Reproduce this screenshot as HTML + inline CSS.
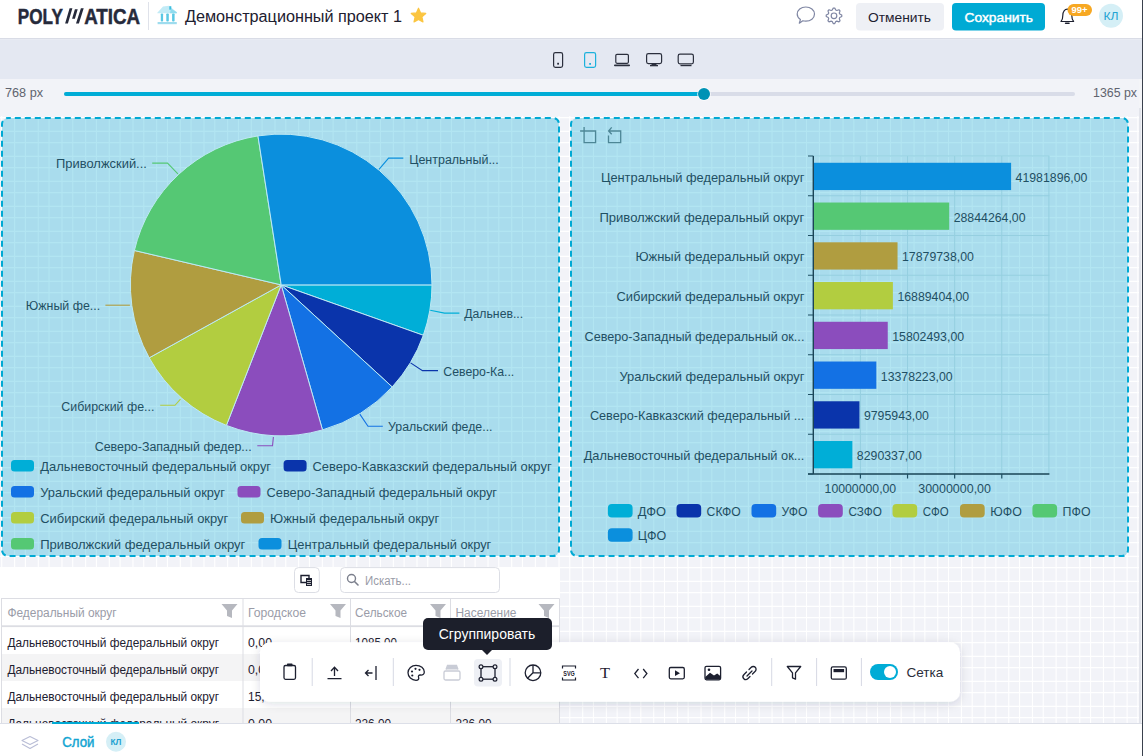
<!DOCTYPE html>
<html><head><meta charset="utf-8"><title>Polymatica</title>
<style>html,body{margin:0;padding:0;width:1143px;height:756px;overflow:hidden;background:#fff}svg{display:block;font-family:"Liberation Sans",sans-serif}</style>
</head><body><svg width="1143" height="756" viewBox="0 0 1143 756" font-family='"Liberation Sans", sans-serif'><rect x="0" y="0" width="1143" height="756" fill="#ffffff"/><rect x="0" y="38" width="1143" height="1.2" fill="#d9dce6"/><rect x="0" y="39.2" width="1143" height="39.8" fill="#e4e8f2"/><rect x="0" y="79" width="1139" height="644" fill="#f2f3f8"/><path d="M0 117.60H1139M0 131.40H1139M0 142.60H1139M0 156.40H1139M0 167.60H1139M0 181.40H1139M0 192.60H1139M0 206.40H1139M0 217.60H1139M0 231.40H1139M0 242.60H1139M0 256.40H1139M0 267.60H1139M0 281.40H1139M0 292.60H1139M0 306.40H1139M0 317.60H1139M0 331.40H1139M0 342.60H1139M0 356.40H1139M0 367.60H1139M0 381.40H1139M0 392.60H1139M0 406.40H1139M0 417.60H1139M0 431.40H1139M0 442.60H1139M0 456.40H1139M0 467.60H1139M0 481.40H1139M0 492.60H1139M0 506.40H1139M0 517.60H1139M0 531.40H1139M0 542.60H1139M0 556.40H1139M0 567.60H1139M0 581.40H1139M0 592.60H1139M0 606.40H1139M0 617.60H1139M0 631.40H1139M0 642.60H1139M0 656.40H1139M0 667.60H1139M0 681.40H1139M0 692.60H1139M0 706.40H1139M0 717.60H1139M1.72 116V723M14.62 116V723M25.39 116V723M38.29 116V723M49.06 116V723M61.96 116V723M72.73 116V723M85.63 116V723M96.40 116V723M109.30 116V723M120.07 116V723M132.97 116V723M143.74 116V723M156.64 116V723M167.41 116V723M180.31 116V723M191.08 116V723M203.98 116V723M214.75 116V723M227.65 116V723M238.42 116V723M251.32 116V723M262.09 116V723M274.99 116V723M285.76 116V723M298.66 116V723M309.43 116V723M322.33 116V723M333.10 116V723M346.00 116V723M356.77 116V723M369.67 116V723M380.44 116V723M393.34 116V723M404.11 116V723M417.01 116V723M427.78 116V723M440.68 116V723M451.45 116V723M464.35 116V723M475.12 116V723M488.02 116V723M498.79 116V723M511.69 116V723M522.46 116V723M535.36 116V723M546.13 116V723M559.03 116V723M569.80 116V723M582.70 116V723M593.47 116V723M606.37 116V723M617.14 116V723M630.04 116V723M640.81 116V723M653.71 116V723M664.48 116V723M677.38 116V723M688.15 116V723M701.05 116V723M711.82 116V723M724.72 116V723M735.49 116V723M748.39 116V723M759.16 116V723M772.06 116V723M782.83 116V723M795.73 116V723M806.50 116V723M819.40 116V723M830.17 116V723M843.07 116V723M853.84 116V723M866.74 116V723M877.51 116V723M890.41 116V723M901.18 116V723M914.08 116V723M924.85 116V723M937.75 116V723M948.52 116V723M961.42 116V723M972.19 116V723M985.09 116V723M995.86 116V723M1008.76 116V723M1019.53 116V723M1032.43 116V723M1043.20 116V723M1056.10 116V723M1066.87 116V723M1079.77 116V723M1090.54 116V723M1103.44 116V723M1114.21 116V723M1127.11 116V723M1137.88 116V723" stroke="#ffffff" stroke-width="1.1" fill="none"/><rect x="0" y="79" width="1139" height="37" fill="#f2f3f8"/><rect x="1139" y="79" width="4" height="677" fill="#f4f5f8"/><rect x="1139" y="108" width="2" height="615" fill="#e3e5ec"/><rect x="1142" y="0" width="1" height="756" fill="#3a414d"/><g fill="#262a3b"><text x="17.8" y="23.6" font-size="22.5" fill="#262a3b" font-weight="700" textLength="45" lengthAdjust="spacingAndGlyphs" stroke="#262a3b" stroke-width="0.5">POLY</text><text x="84.2" y="23.6" font-size="22.5" fill="#262a3b" font-weight="700" textLength="55.9" lengthAdjust="spacingAndGlyphs" stroke="#262a3b" stroke-width="0.5">ATICA</text></g><path d="M65.1 23.6 L67.9 23.6 L72.4 8.2 L69.6 8.2Z M72.1 18.7 L74.9 18.7 L77.7 9.2 L74.9 9.2Z M76 23.6 L78.9 23.6 L83.7 8.2 L80.9 8.2Z" fill="#262a3b"/><rect x="148" y="2" width="1" height="28" fill="#dfe2ea"/><path d="M157.3 12.8 L163 6.6 L169 5.8 L176.8 12.2 L176.8 13.2 L157.3 13.2Z" fill="#c2ebf6"/><path d="M169.3 6.2 h2 v3.5 h-2z" fill="#3cbfe0"/><path d="M171 8.5 L176.8 12.2 V13.2 H170Z" fill="#8fdbee"/><g fill="#5ac8e4"><rect x="160.8" y="13.4" width="2.3" height="8.2" rx="0.8"/><rect x="166.3" y="13.4" width="2.5" height="8.2" rx="0.8"/><rect x="172.1" y="13.4" width="2.5" height="8.2" rx="0.8"/></g><rect x="157.6" y="22" width="19.2" height="2.2" fill="#9edcee"/><text x="185" y="21.5" font-size="16" fill="#1d2030" textLength="217" lengthAdjust="spacingAndGlyphs">Демонстрационный проект 1</text><polygon points="418.50,8.20 420.62,12.89 425.73,13.45 421.92,16.91 422.97,21.95 418.50,19.40 414.03,21.95 415.08,16.91 411.27,13.45 416.38,12.89" fill="#fbc540" stroke="#fbc540" stroke-width="1.2" stroke-linejoin="round"/><path d="M800.4 19.6 C798.3 18.2 797.2 16.3 797.2 14.1 C797.2 10 801 7 805.8 7 C810.6 7 814.5 10 814.5 14.1 C814.5 18.2 810.6 21.2 805.8 21.2 C804.7 21.2 803.7 21.1 802.8 20.8 L799.3 23.2 Z" fill="none" stroke="#7f86a3" stroke-width="1.2" stroke-linejoin="round"/><polygon points="841.76,15.04 841.76,16.57 839.74,17.54 839.29,18.63 840.03,20.75 838.95,21.83 836.83,21.09 835.74,21.54 834.76,23.56 833.23,23.56 832.26,21.54 831.17,21.09 829.05,21.83 827.97,20.75 828.71,18.63 828.26,17.54 826.24,16.56 826.24,15.03 828.26,14.06 828.71,12.97 827.97,10.85 829.05,9.77 831.17,10.51 832.26,10.06 833.24,8.04 834.77,8.04 835.74,10.06 836.83,10.51 838.95,9.77 840.03,10.85 839.29,12.97 839.74,14.06" fill="none" stroke="#7f86a3" stroke-width="1.2" stroke-linejoin="round"/><circle cx="834" cy="15.8" r="2.8" fill="none" stroke="#7f86a3" stroke-width="1.2"/><rect x="856" y="3" width="88" height="27.5" rx="4" fill="#eef0f5"/><text x="868" y="21.7" font-size="13.5" fill="#1d2030" textLength="63" lengthAdjust="spacingAndGlyphs">Отменить</text><rect x="952" y="3" width="93" height="27.5" rx="4" fill="#00aad4"/><text x="964.5" y="21.7" font-size="13.5" fill="#ffffff" textLength="68.5" lengthAdjust="spacingAndGlyphs" stroke="#ffffff" stroke-width="0.45">Сохранить</text><path d="M1061 21.5 C1062.5 20 1062.8 18.5 1062.8 15.5 C1062.8 11.5 1064.8 9.2 1067.3 9.2 C1069.8 9.2 1071.8 11.5 1071.8 15.5 C1071.8 18.5 1072.1 20 1073.6 21.5 Z" fill="none" stroke="#1d2030" stroke-width="1.2" stroke-linejoin="round"/><path d="M1065.6 23.3 h3.4" stroke="#1d2030" stroke-width="1.6" stroke-linecap="round"/><rect x="1067.5" y="4" width="24.5" height="12" rx="6" fill="#f7a823"/><text x="1079.5" y="12.6" font-size="9.5" fill="#ffffff" font-weight="700" text-anchor="middle" textLength="16" lengthAdjust="spacingAndGlyphs">99+</text><circle cx="1111" cy="15.8" r="12" fill="#d5eff6"/><text x="1111" y="20" font-size="11.5" fill="#23a3d2" text-anchor="middle" textLength="15" lengthAdjust="spacingAndGlyphs">КЛ</text><rect x="553.6" y="52.6" width="9" height="14.8" rx="1.8" fill="none" stroke="#2b2f3d" stroke-width="1.2"/><rect x="557.2" y="62.8" width="1.8" height="1.8" fill="#2b2f3d"/><rect x="584.6" y="52.6" width="11" height="14.8" rx="1.8" fill="none" stroke="#1cb1dc" stroke-width="1.2"/><rect x="589.2" y="63" width="1.8" height="1.8" fill="#1cb1dc"/><rect x="615.8" y="54.3" width="12.6" height="9" rx="1.2" fill="none" stroke="#2b2f3d" stroke-width="1.2"/><rect x="614" y="64.6" width="16" height="1.6" rx="0.8" fill="#2b2f3d"/><rect x="646.6" y="53.6" width="15" height="10" rx="1.8" fill="none" stroke="#2b2f3d" stroke-width="1.2"/><rect x="651.5" y="63.8" width="5" height="1.5" fill="#2b2f3d"/><rect x="650" y="65" width="8" height="1.3" fill="#2b2f3d"/><rect x="678.2" y="54.2" width="15.2" height="9.6" rx="1.8" fill="none" stroke="#2b2f3d" stroke-width="1.2"/><rect x="680.5" y="65" width="11" height="1.2" fill="#2b2f3d"/><text x="5" y="97" font-size="12.5" fill="#60636f" textLength="38" lengthAdjust="spacingAndGlyphs">768 px</text><text x="1093" y="97" font-size="12.5" fill="#60636f" textLength="44" lengthAdjust="spacingAndGlyphs">1365 px</text><rect x="64" y="92" width="1011" height="4" rx="2" fill="#d9dce8"/><rect x="64" y="92" width="640" height="4" rx="2" fill="#00acd6"/><circle cx="704" cy="94" r="6.8" fill="#ffffff" opacity="0.9"/><circle cx="704" cy="94" r="6" fill="#0092b5"/><rect x="2" y="118" width="557" height="438" rx="6" fill="rgba(0,169,212,0.3)"/><rect x="571" y="118" width="557" height="438" rx="6" fill="rgba(0,169,212,0.3)"/><path d="M281.2 284.9 L432.00 284.90 A150.8 150.8 0 0 1 423.33 335.30Z" fill="#00aed7" stroke="#bde9f4" stroke-width="1"/><path d="M281.2 284.9 L423.33 335.30 A150.8 150.8 0 0 1 392.21 386.96Z" fill="#0a34ab" stroke="#bde9f4" stroke-width="1"/><path d="M281.2 284.9 L392.21 386.96 A150.8 150.8 0 0 1 322.51 429.93Z" fill="#1371e4" stroke="#bde9f4" stroke-width="1"/><path d="M281.2 284.9 L322.51 429.93 A150.8 150.8 0 0 1 226.38 425.38Z" fill="#8b4dbd" stroke="#bde9f4" stroke-width="1"/><path d="M281.2 284.9 L226.38 425.38 A150.8 150.8 0 0 1 149.19 357.80Z" fill="#b2cd40" stroke="#bde9f4" stroke-width="1"/><path d="M281.2 284.9 L149.19 357.80 A150.8 150.8 0 0 1 134.38 250.46Z" fill="#b09d40" stroke="#bde9f4" stroke-width="1"/><path d="M281.2 284.9 L134.38 250.46 A150.8 150.8 0 0 1 257.95 135.90Z" fill="#55c874" stroke="#bde9f4" stroke-width="1"/><path d="M281.2 284.9 L257.95 135.90 A150.8 150.8 0 0 1 432.00 284.90Z" fill="#0b8fdd" stroke="#bde9f4" stroke-width="1"/><path d="M379 169.3 L388.6 158.1 L403.3 158.1" fill="none" stroke="#0b8fdd" stroke-width="1.1"/><text x="409.2" y="164.4" font-size="12.5" fill="#1f4f63" textLength="89.6" lengthAdjust="spacingAndGlyphs">Центральный...</text><path d="M430.2 310.2 L444.5 313.1 L459.4 313.1" fill="none" stroke="#00aed7" stroke-width="1.1"/><text x="464.2" y="317.9" font-size="12.5" fill="#1f4f63" textLength="59" lengthAdjust="spacingAndGlyphs">Дальнев...</text><path d="M410.6 362.9 L422.5 370.6 L438 370.6" fill="none" stroke="#0a34ab" stroke-width="1.1"/><text x="443.3" y="376" font-size="12.5" fill="#1f4f63" textLength="71" lengthAdjust="spacingAndGlyphs">Северо-Ка...</text><path d="M359.8 414.1 L368 426.3 L382.8 426.3" fill="none" stroke="#1371e4" stroke-width="1.1"/><text x="388" y="431" font-size="12.5" fill="#1f4f63" textLength="104.5" lengthAdjust="spacingAndGlyphs">Уральский феде...</text><path d="M273.4 437 L272.5 445.7 L257.3 445.7" fill="none" stroke="#8b4dbd" stroke-width="1.1"/><text x="94.7" y="451.2" font-size="12.5" fill="#1f4f63" textLength="157" lengthAdjust="spacingAndGlyphs">Северо-Западный федер...</text><path d="M180.5 399.2 L175 405.3 L160.2 405.3" fill="none" stroke="#b2cd40" stroke-width="1.1"/><text x="61.3" y="410.6" font-size="12.5" fill="#1f4f63" textLength="93.1" lengthAdjust="spacingAndGlyphs">Сибирский фе...</text><path d="M129.9 305.2 L120.8 305.2 L105.4 305.2" fill="none" stroke="#b09d40" stroke-width="1.1"/><text x="25.8" y="309.8" font-size="12.5" fill="#1f4f63" textLength="74.3" lengthAdjust="spacingAndGlyphs">Южный фе...</text><path d="M177.9 173.8 L167.5 163.1 L152.2 163.1" fill="none" stroke="#55c874" stroke-width="1.1"/><text x="56" y="167.7" font-size="12.5" fill="#1f4f63" textLength="90.9" lengthAdjust="spacingAndGlyphs">Приволжский...</text><rect x="11" y="460.1" width="23" height="11.5" rx="3.5" fill="#00aed7"/><text x="40.2" y="471.3" font-size="13" fill="#1f4f63" textLength="230.9" lengthAdjust="spacingAndGlyphs">Дальневосточный федеральный округ</text><rect x="283.6" y="460.1" width="23" height="11.5" rx="3.5" fill="#0a34ab"/><text x="312.5" y="471.3" font-size="13" fill="#1f4f63" textLength="239.1" lengthAdjust="spacingAndGlyphs">Северо-Кавказский федеральный округ</text><rect x="11" y="486.1" width="23" height="11.5" rx="3.5" fill="#1371e4"/><text x="40.2" y="497.3" font-size="13" fill="#1f4f63" textLength="184.8" lengthAdjust="spacingAndGlyphs">Уральский федеральный округ</text><rect x="237.5" y="486.1" width="23" height="11.5" rx="3.5" fill="#8b4dbd"/><text x="266.5" y="497.3" font-size="13" fill="#1f4f63" textLength="230.5" lengthAdjust="spacingAndGlyphs">Северо-Западный федеральный округ</text><rect x="11" y="512.0999999999999" width="23" height="11.5" rx="3.5" fill="#b2cd40"/><text x="40.2" y="523.3" font-size="13" fill="#1f4f63" textLength="188.1" lengthAdjust="spacingAndGlyphs">Сибирский федеральный округ</text><rect x="241" y="512.0999999999999" width="23" height="11.5" rx="3.5" fill="#b09d40"/><text x="270" y="523.3" font-size="13" fill="#1f4f63" textLength="169.3" lengthAdjust="spacingAndGlyphs">Южный федеральный округ</text><rect x="11" y="538.0999999999999" width="23" height="11.5" rx="3.5" fill="#55c874"/><text x="40.2" y="549.3" font-size="13" fill="#1f4f63" textLength="205.2" lengthAdjust="spacingAndGlyphs">Приволжский федеральный округ</text><rect x="258.5" y="538.0999999999999" width="23" height="11.5" rx="3.5" fill="#0b8fdd"/><text x="287.8" y="549.3" font-size="13" fill="#1f4f63" textLength="203.5" lengthAdjust="spacingAndGlyphs">Центральный федеральный округ</text><path d="M860.42 156V474M907.54 156V474M954.66 156V474M1001.78 156V474M1048.90 156V474M813.3 156.00H1049.4M813.3 195.75H1049.4M813.3 235.50H1049.4M813.3 275.25H1049.4M813.3 315.00H1049.4M813.3 354.75H1049.4M813.3 394.50H1049.4M813.3 434.25H1049.4" stroke="#95cfe0" stroke-width="1" fill="none"/><rect x="813.3" y="162.78" width="197.80" height="27.3" fill="#0b8fdd"/><text x="804.4" y="181.8" font-size="12.8" fill="#1f4f63" text-anchor="end" textLength="203.5" lengthAdjust="spacingAndGlyphs">Центральный федеральный округ</text><text x="1015.6" y="181.8" font-size="12.3" fill="#1f4f63">41981896,00</text><rect x="813.3" y="202.53" width="135.90" height="27.3" fill="#55c874"/><text x="804.4" y="221.55" font-size="12.8" fill="#1f4f63" text-anchor="end" textLength="205" lengthAdjust="spacingAndGlyphs">Приволжский федеральный округ</text><text x="953.7" y="221.55" font-size="12.3" fill="#1f4f63">28844264,00</text><rect x="813.3" y="242.28" width="84.24" height="27.3" fill="#b09d40"/><text x="804.4" y="261.3" font-size="12.8" fill="#1f4f63" text-anchor="end" textLength="169" lengthAdjust="spacingAndGlyphs">Южный федеральный округ</text><text x="902.04" y="261.3" font-size="12.3" fill="#1f4f63">17879738,00</text><rect x="813.3" y="282.02" width="79.58" height="27.3" fill="#b2cd40"/><text x="804.4" y="301.05" font-size="12.8" fill="#1f4f63" text-anchor="end" textLength="187.9" lengthAdjust="spacingAndGlyphs">Сибирский федеральный округ</text><text x="897.38" y="301.05" font-size="12.3" fill="#1f4f63">16889404,00</text><rect x="813.3" y="321.77" width="74.45" height="27.3" fill="#8b4dbd"/><text x="804.4" y="340.8" font-size="12.8" fill="#1f4f63" text-anchor="end" textLength="219.9" lengthAdjust="spacingAndGlyphs">Северо-Западный федеральный ок...</text><text x="892.25" y="340.8" font-size="12.3" fill="#1f4f63">15802493,00</text><rect x="813.3" y="361.52" width="63.03" height="27.3" fill="#1371e4"/><text x="804.4" y="380.55" font-size="12.8" fill="#1f4f63" text-anchor="end" textLength="185" lengthAdjust="spacingAndGlyphs">Уральский федеральный округ</text><text x="880.83" y="380.55" font-size="12.3" fill="#1f4f63">13378223,00</text><rect x="813.3" y="401.27" width="46.15" height="27.3" fill="#0a34ab"/><text x="804.4" y="420.3" font-size="12.8" fill="#1f4f63" text-anchor="end" textLength="214.5" lengthAdjust="spacingAndGlyphs">Северо-Кавказский федеральный ...</text><text x="863.95" y="420.3" font-size="12.3" fill="#1f4f63">9795943,00</text><rect x="813.3" y="441.02" width="39.06" height="27.3" fill="#00aed7"/><text x="804.4" y="460.05" font-size="12.8" fill="#1f4f63" text-anchor="end" textLength="220.7" lengthAdjust="spacingAndGlyphs">Дальневосточный федеральный ок...</text><text x="856.86" y="460.05" font-size="12.3" fill="#1f4f63">8290337,00</text><path d="M813.3 156V474M808 474H1049.4" stroke="#1a4456" stroke-width="1.4" fill="none"/><path d="M808 156.00H813.3M808 195.75H813.3M808 235.50H813.3M808 275.25H813.3M808 315.00H813.3M808 354.75H813.3M808 394.50H813.3M808 434.25H813.3M808 474.00H813.3M860.42 474V478.4M907.54 474V478.4M954.66 474V478.4M1001.78 474V478.4" stroke="#1f4f63" stroke-width="1.2" fill="none"/><text x="860.4" y="492.6" font-size="12.3" fill="#1f4f63" text-anchor="middle" textLength="71.6" lengthAdjust="spacingAndGlyphs">10000000,00</text><text x="954.6" y="492.6" font-size="12.3" fill="#1f4f63" text-anchor="middle" textLength="72.7" lengthAdjust="spacingAndGlyphs">30000000,00</text><rect x="607.9" y="504.1" width="24.7" height="13.5" rx="4" fill="#00aed7"/><text x="637.8" y="516.1" font-size="13" fill="#1f4f63" textLength="28.2" lengthAdjust="spacingAndGlyphs">ДФО</text><rect x="676.5" y="504.1" width="24.7" height="13.5" rx="4" fill="#0a34ab"/><text x="706.6" y="516.1" font-size="13" fill="#1f4f63" textLength="34.2" lengthAdjust="spacingAndGlyphs">СКФО</text><rect x="751.5" y="504.1" width="24.7" height="13.5" rx="4" fill="#1371e4"/><text x="781.5" y="516.1" font-size="13" fill="#1f4f63" textLength="25.9" lengthAdjust="spacingAndGlyphs">УФО</text><rect x="818.1" y="504.1" width="24.7" height="13.5" rx="4" fill="#8b4dbd"/><text x="848.5" y="516.1" font-size="13" fill="#1f4f63" textLength="33.4" lengthAdjust="spacingAndGlyphs">СЗФО</text><rect x="892.5" y="504.1" width="24.7" height="13.5" rx="4" fill="#b2cd40"/><text x="922.7" y="516.1" font-size="13" fill="#1f4f63" textLength="26" lengthAdjust="spacingAndGlyphs">СФО</text><rect x="960" y="504.1" width="24.7" height="13.5" rx="4" fill="#b09d40"/><text x="990.3" y="516.1" font-size="13" fill="#1f4f63" textLength="31.5" lengthAdjust="spacingAndGlyphs">ЮФО</text><rect x="1032.4" y="504.1" width="24.7" height="13.5" rx="4" fill="#55c874"/><text x="1062.6" y="516.1" font-size="13" fill="#1f4f63" textLength="27.9" lengthAdjust="spacingAndGlyphs">ПФО</text><rect x="607.9" y="528.2" width="24.7" height="13.5" rx="4" fill="#0b8fdd"/><text x="637.8" y="539.9" font-size="13" fill="#1f4f63" textLength="28.5" lengthAdjust="spacingAndGlyphs">ЦФО</text><path d="M584.1 127.1 V142.6 H595.6 V131 H580.1" fill="none" stroke="#4d8696" stroke-width="1.3"/><path d="M608.5 135.5 V142.6 H620.7 V131 H608.8 M611.7 127.4 L608.6 131 L611.7 134.3" fill="none" stroke="#4d8696" stroke-width="1.3"/><rect x="2" y="118" width="557" height="438" rx="6" fill="none" stroke="#00a9d4" stroke-width="2" stroke-dasharray="6 4" stroke-dashoffset="3.2"/><rect x="571" y="118" width="557" height="438" rx="6" fill="none" stroke="#00a9d4" stroke-width="2" stroke-dasharray="6 4" stroke-dashoffset="3.2"/><rect x="0" y="567" width="560" height="156" fill="#ffffff"/><rect x="294.5" y="567.6" width="24.8" height="24.9" rx="4" fill="#ffffff" stroke="#dcdee5" stroke-width="1"/><path d="M301 575.5h8v7h-8z" fill="none" stroke="#1d2030" stroke-width="1.4"/><rect x="306" y="578" width="6" height="8" fill="#1d2030"/><path d="M307 580.5h4M307 582.5h4M307 584.5h4" stroke="#fff" stroke-width="0.7"/><rect x="340.5" y="567.6" width="159" height="24.9" rx="4" fill="#ffffff" stroke="#dcdee5" stroke-width="1"/><circle cx="351.5" cy="578.5" r="4" fill="none" stroke="#7b7f8c" stroke-width="1.4"/><path d="M354.5 581.5 L358 585" stroke="#7b7f8c" stroke-width="1.6" stroke-linecap="round"/><text x="365" y="585" font-size="12.5" fill="#9a9ca8" textLength="46" lengthAdjust="spacingAndGlyphs">Искать...</text><rect x="1" y="598.5" width="559" height="124" fill="#ffffff" stroke="none"/><rect x="1" y="654" width="559" height="27" fill="#f4f4f5"/><rect x="1" y="708" width="559" height="15" fill="#f4f4f5"/><path d="M1.5 598.5V723 M1 598.5H559.5 M243 598.5V723 M350.5 598.5V723 M450.5 598.5V723 M559.5 598.5V723" stroke="#dcdde3" stroke-width="1" fill="none"/><rect x="1" y="625.3" width="559" height="1.8" fill="#dcdde3"/><text x="7.4" y="616.8" font-size="12.5" fill="#9a9ca8" textLength="109.2" lengthAdjust="spacingAndGlyphs">Федеральный округ</text><text x="248" y="616.8" font-size="12.5" fill="#9a9ca8" textLength="58" lengthAdjust="spacingAndGlyphs">Городское</text><text x="355" y="616.8" font-size="12.5" fill="#9a9ca8" textLength="52" lengthAdjust="spacingAndGlyphs">Сельское</text><text x="455.5" y="616.8" font-size="12.5" fill="#9a9ca8" textLength="61" lengthAdjust="spacingAndGlyphs">Население</text><path d="M221.5 604 h16 l-5.5 6.5 v7.5 l-5 -2 v-5.5z" fill="#b6b8bf"/><path d="M330 604 h16 l-5.5 6.5 v7.5 l-5 -2 v-5.5z" fill="#b6b8bf"/><path d="M430 604 h16 l-5.5 6.5 v7.5 l-5 -2 v-5.5z" fill="#b6b8bf"/><path d="M538.5 604 h16 l-5.5 6.5 v7.5 l-5 -2 v-5.5z" fill="#b6b8bf"/><text x="7.4" y="646.6" font-size="12.2" fill="#1d2030" textLength="211.6" lengthAdjust="spacingAndGlyphs">Дальневосточный федеральный округ</text><text x="7.4" y="673.6" font-size="12.2" fill="#1d2030" textLength="211.6" lengthAdjust="spacingAndGlyphs">Дальневосточный федеральный округ</text><text x="7.4" y="700.6" font-size="12.2" fill="#1d2030" textLength="211.6" lengthAdjust="spacingAndGlyphs">Дальневосточный федеральный округ</text><text x="7.4" y="727.6" font-size="12.2" fill="#1d2030" textLength="211.6" lengthAdjust="spacingAndGlyphs">Дальневосточный федеральный округ</text><text x="248" y="646.6" font-size="12.2" fill="#1d2030" textLength="24" lengthAdjust="spacingAndGlyphs">0,00</text><text x="355" y="646.6" font-size="12.2" fill="#1d2030" textLength="42" lengthAdjust="spacingAndGlyphs">1085,00</text><text x="455.5" y="646.6" font-size="12.2" fill="#1d2030" textLength="42" lengthAdjust="spacingAndGlyphs">1085,00</text><text x="248" y="673.6" font-size="12.2" fill="#1d2030" textLength="24" lengthAdjust="spacingAndGlyphs">0,00</text><text x="248" y="700.6" font-size="12.2" fill="#1d2030" textLength="30" lengthAdjust="spacingAndGlyphs">15,00</text><text x="248" y="727.6" font-size="12.2" fill="#1d2030" textLength="24" lengthAdjust="spacingAndGlyphs">0,00</text><text x="355" y="727.6" font-size="12.2" fill="#1d2030" textLength="36" lengthAdjust="spacingAndGlyphs">226,00</text><text x="455.5" y="727.6" font-size="12.2" fill="#1d2030" textLength="36" lengthAdjust="spacingAndGlyphs">226,00</text><rect x="0" y="723" width="1142" height="33" fill="#ffffff"/><rect x="0" y="723" width="1142" height="1" fill="#dcdfe8"/><rect x="52" y="722" width="87" height="2" fill="#00aad4"/><path d="M30 736.5 L38 740.5 L30 744.5 L22 740.5Z M22 744 L30 748.5 L38 744" fill="none" stroke="#b9bdd6" stroke-width="1.1" stroke-linejoin="round"/><text x="62.3" y="747" font-size="14" fill="#13a5d2" textLength="32.2" lengthAdjust="spacingAndGlyphs" stroke="#13a5d2" stroke-width="0.45">Слой</text><circle cx="116" cy="741.8" r="10" fill="#d5eff6"/><text x="116" y="744.6" font-size="9.5" fill="#1d9fd0" font-weight="700" text-anchor="middle" textLength="11" lengthAdjust="spacingAndGlyphs">КЛ</text><defs><filter id="sh" x="-10%" y="-50%" width="120%" height="200%"><feDropShadow dx="0" dy="2" stdDeviation="5" flood-color="#1c2040" flood-opacity="0.14"/></filter></defs><rect x="260" y="642.2" width="700" height="59.6" rx="10" fill="#ffffff" filter="url(#sh)"/><rect x="311.7" y="658" width="1" height="28" fill="#d6d9e4"/><rect x="392.8" y="658" width="1" height="28" fill="#d6d9e4"/><rect x="509.5" y="658" width="1" height="28" fill="#d6d9e4"/><rect x="771.2" y="658" width="1" height="28" fill="#d6d9e4"/><rect x="816.1" y="658" width="1" height="28" fill="#d6d9e4"/><rect x="860.9" y="658" width="1" height="28" fill="#d6d9e4"/><rect x="284" y="665.5" width="11.5" height="13.8" rx="1.5" fill="none" stroke="#1d2030" stroke-width="1.3"/><rect x="287" y="663.6" width="5.5" height="2.6" rx="0.6" fill="#1d2030"/><path d="M334.5 676 V667.5 M331 671 L334.5 667.3 L338 671 M327.5 678.6 H341.5" fill="none" stroke="#1d2030" stroke-width="1.3"/><path d="M376 666 V680 M372.5 673 H365.5 M368.5 670 L365.5 673 L368.5 676" fill="none" stroke="#1d2030" stroke-width="1.3"/><path d="M416 665.3 C420.8 665.3 424.3 668.4 424.3 672 C424.3 674.5 422.5 675.2 420.5 675 C418.8 674.8 418 676 418.6 677.5 C419.2 679 418.2 680.3 416 680.3 C411.6 680.3 408 676.9 408 672.8 C408 668.6 411.6 665.3 416 665.3Z" fill="none" stroke="#1d2030" stroke-width="1.3"/><circle cx="412" cy="671.5" r="1.1" fill="#1d2030"/><circle cx="415.5" cy="668.8" r="1.1" fill="#1d2030"/><circle cx="419.5" cy="669.8" r="1.1" fill="#1d2030"/><circle cx="412.3" cy="675.5" r="1.1" fill="#1d2030"/><rect x="444" y="671" width="16" height="9" rx="1.5" fill="none" stroke="#c9ccd6" stroke-width="1.3"/><path d="M446 669.5 L447.5 665.5 H456.5 L458 669.5" fill="#c9ccd6" stroke="#c9ccd6" stroke-width="1.3"/><rect x="474" y="659" width="28" height="27.5" rx="4" fill="#eef0f5"/><rect x="481" y="666.7" width="14" height="12.5" fill="none" stroke="#1d2030" stroke-width="1.3"/><circle cx="481" cy="666.7" r="1.9" fill="#eef0f5" stroke="#1d2030" stroke-width="1.2"/><circle cx="495" cy="666.7" r="1.9" fill="#eef0f5" stroke="#1d2030" stroke-width="1.2"/><circle cx="481" cy="679.2" r="1.9" fill="#eef0f5" stroke="#1d2030" stroke-width="1.2"/><circle cx="495" cy="679.2" r="1.9" fill="#eef0f5" stroke="#1d2030" stroke-width="1.2"/><circle cx="533" cy="672.8" r="7.8" fill="none" stroke="#1d2030" stroke-width="1.3"/><path d="M533 665 V672.8 H540.8 M533 672.8 L527.3 678.5" fill="none" stroke="#1d2030" stroke-width="1.3"/><path d="M562.5 668.5 V666 H575.5 V668.5 M562.5 677.5 V680 H575.5 V677.5" fill="none" stroke="#1d2030" stroke-width="1.2"/><text x="569" y="676" font-size="7" fill="#1d2030" font-weight="700" text-anchor="middle" textLength="11.5" lengthAdjust="spacingAndGlyphs">SVG</text><text x="605" y="678.2" font-family="Liberation Serif" font-size="14" fill="#1d2030" text-anchor="middle" textLength="10" lengthAdjust="spacingAndGlyphs">T</text><path d="M638.5 669 L634.8 673.6 L638.5 678.2 M643.2 669 L646.9 673.6 L643.2 678.2" fill="none" stroke="#1d2030" stroke-width="1.3"/><rect x="669.3" y="667.5" width="15" height="11.3" rx="1.5" fill="none" stroke="#1d2030" stroke-width="1.3"/><path d="M675 670.3 L680 673.2 L675 676.1Z" fill="#1d2030"/><rect x="705" y="666.3" width="15.6" height="13.5" rx="1.5" fill="none" stroke="#1d2030" stroke-width="1.3"/><path d="M705.3 677 L710 672.8 L714 675.6 L717.2 673.5 L720.3 676 V679.5 H705.3Z" fill="#1d2030"/><circle cx="709" cy="669.8" r="1.3" fill="#1d2030"/><path d="M749 669.5 L751 667.5 C752.3 666.2 754.3 666.2 755.3 667.3 C756.4 668.4 756.3 670.3 755 671.5 L752.5 674 M746.5 672 L744 674.5 C742.8 675.7 742.7 677.6 743.8 678.7 C744.9 679.8 746.8 679.7 748 678.5 L750 676.5 M747 676 L752 671" fill="none" stroke="#1d2030" stroke-width="1.3" stroke-linecap="round"/><path d="M787.3 666.5 H800.7 L795.5 672.8 V679.2 L792.5 677.8 V672.8Z" fill="none" stroke="#1d2030" stroke-width="1.3" stroke-linejoin="round"/><rect x="831.3" y="666.9" width="15" height="12.3" rx="1.5" fill="none" stroke="#1d2030" stroke-width="1.3"/><rect x="833.5" y="669" width="10.6" height="3.2" fill="#1d2030"/><rect x="870" y="664" width="28" height="16" rx="8" fill="#00acd6"/><circle cx="890" cy="672" r="6" fill="#ffffff"/><text x="906.5" y="676.8" font-size="13.5" fill="#2b2e3a" textLength="36.8" lengthAdjust="spacingAndGlyphs">Сетка</text><rect x="423" y="618" width="129" height="32" rx="5" fill="#1c1f2b"/><path d="M481.5 649.5 L487 655 L492.5 649.5Z" fill="#1c1f2b"/><text x="438.7" y="639" font-size="14" fill="#ffffff" textLength="96.6" lengthAdjust="spacingAndGlyphs">Сгруппировать</text></svg></body></html>
